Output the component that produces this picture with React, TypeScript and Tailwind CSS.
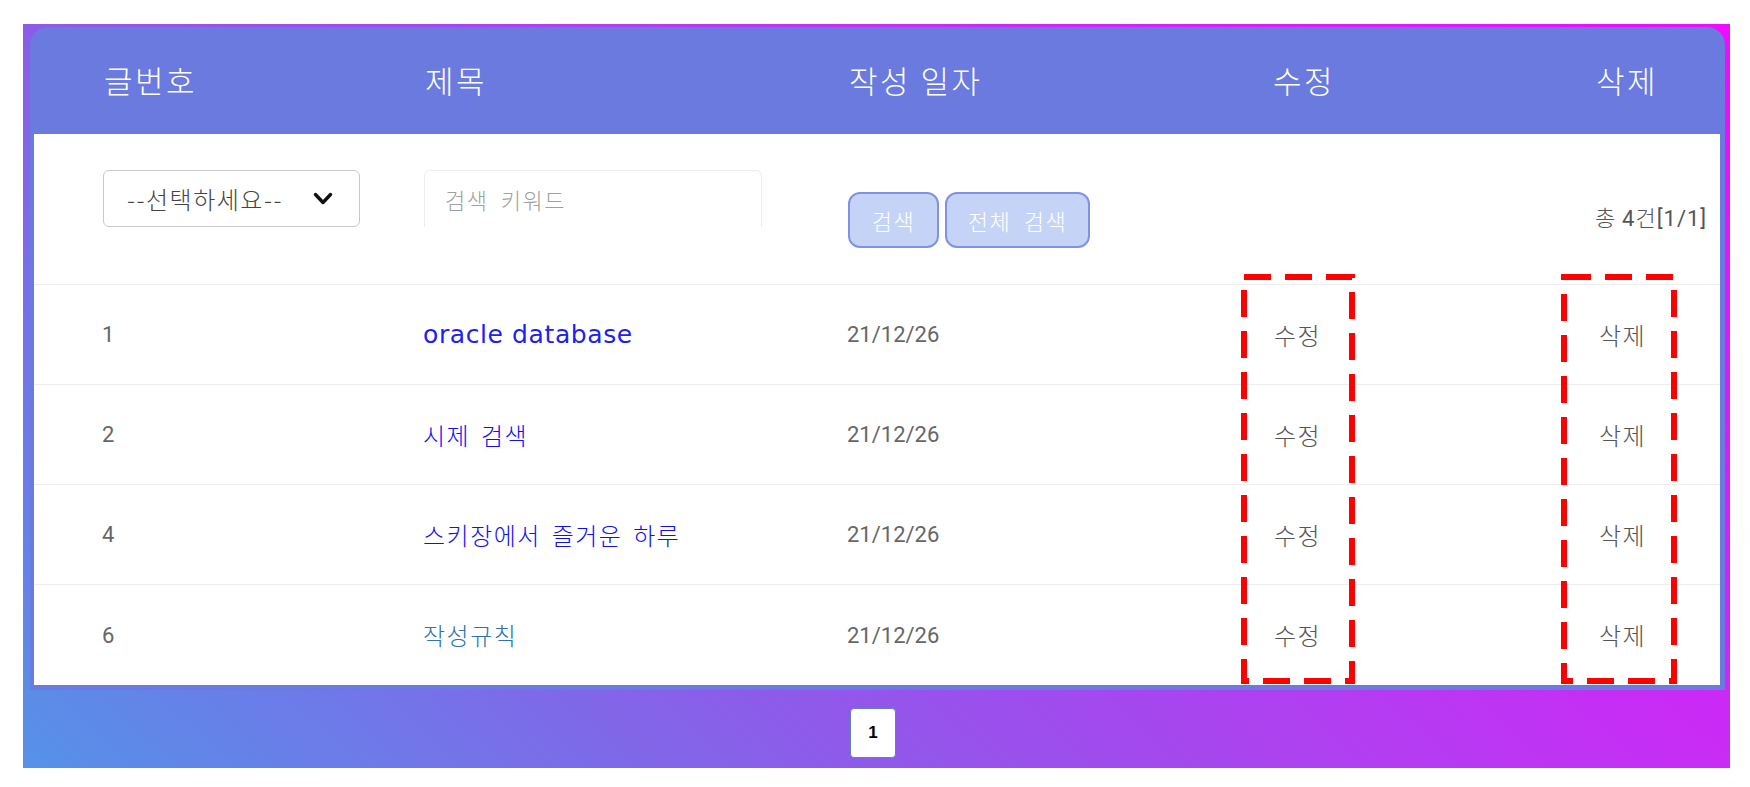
import React from "react";

const KR = "font-['Noto_Sans_CJK_KR','Noto_Sans',sans-serif] font-light";

const rows = [
  { n: "1", title: "oracle database", latin: true, color: "text-[#2020f2]" },
  { n: "2", title: "시제 검색", latin: false, color: "text-[#1010f5]" },
  { n: "4", title: "스키장에서 즐거운 하루", latin: false, color: "text-[#1010f5]" },
  { n: "6", title: "작성규칙", latin: false, color: "text-[#2f72b4]" },
];

function DashBox({ left, width }: { left: string; width: number }) {
  return (
    <svg
      className={`pointer-events-none absolute top-[140px] ${left}`}
      width={width}
      height={410}
      viewBox={`0 0 ${width} 410`}
    >
      <rect
        x={3}
        y={3}
        width={width - 6}
        height={404}
        fill="none"
        stroke="#ff0000"
        strokeWidth={6}
        strokeDasharray="27 14"
      />
    </svg>
  );
}

export default function App() {
  return (
    <div className="min-h-screen bg-white pl-[23px] pt-[24px]">
      <div className="flex h-[744px] w-[1707px] flex-col bg-[linear-gradient(43deg,#5592e8_0%,#8c5ce9_32%,#c82cf5_68%,#f00cff_100%)]">
        {/* card */}
        <div className="ml-[7px] mt-[3px] w-[1695px] rounded-t-[18px] bg-[#6b7ade] pb-[5px]">
          {/* header */}
          <div
            className={`grid h-[107px] grid-cols-[321px_424px_424px_323px_1fr] items-center pl-[74px] text-[31px] tracking-[2.5px] text-white ${KR}`}
          >
            <div>글번호</div>
            <div>제목</div>
            <div>작성 일자</div>
            <div>수정</div>
            <div>삭제</div>
          </div>

          {/* body */}
          <div className="relative ml-[4px] mr-[5px] bg-white">
            {/* filter row */}
            <div className="grid h-[150px] grid-cols-[321px_424px_424px_323px_1fr] items-start pl-[69px]">
              <div className="pt-[36px]">
                <div
                  className={`flex h-[57px] w-[257px] items-center justify-between rounded-[6px] border border-[#c9c9c9] pl-[23px] pr-[26px] text-[24px] tracking-[1.5px] text-[#444] ${KR}`}
                >
                  <span>--선택하세요--</span>
                  <svg width="20" height="14" viewBox="0 0 20 14">
                    <path d="M2.5 2.5 L10 10.5 L17.5 2.5" fill="none" stroke="#111" strokeWidth="3.4" strokeLinecap="round" strokeLinejoin="round" />
                  </svg>
                </div>
              </div>
              <div className="pt-[36px]">
                <div
                  className={`flex h-[57px] w-[338px] items-center rounded-t-[6px] border border-b-0 border-[#ececec] pl-[20px] text-[22px] tracking-[1.5px] [word-spacing:6px] text-[#a0a0a0] ${KR}`}
                >
                  검색 키워드
                </div>
              </div>
              <div className={`flex gap-[6px] pt-[58px] text-[22px] tracking-[1.5px] [word-spacing:6px] text-white ${KR}`}>
                <div className="flex h-[56px] w-[91px] items-center justify-center rounded-[12px] border-2 border-[#8191e6] bg-[#c5d4f6]">
                  검색
                </div>
                <div className="flex h-[56px] w-[145px] items-center justify-center rounded-[12px] border-2 border-[#8191e6] bg-[#c5d4f6]">
                  전체 검색
                </div>
              </div>
              <div />
              <div className={`pt-[68px] text-[22px] leading-[28px] tracking-[1px] text-[#555] ${KR}`}>
                총 <span className="font-['Roboto',sans-serif] font-normal">4</span>건<span className="font-['Roboto',sans-serif] font-normal">[1/1]</span>
              </div>
            </div>

            {/* data rows */}
            {rows.map((r, i) => (
              <div
                key={r.n}
                className={`grid ${i === rows.length - 1 ? "h-[101px]" : "h-[100px]"} grid-cols-[321px_424px_424px_323px_1fr] items-center border-t border-[#ededed] pl-[68px]`}
              >
                <div className="font-['Roboto',sans-serif] text-[22px] text-[#666]">{r.n}</div>
                <div
                  className={
                    r.latin
                      ? `font-['DejaVu_Sans',sans-serif] text-[25px] tracking-[0.6px] ${r.color}`
                      : `${KR} text-[24px] tracking-[1.5px] [word-spacing:4px] ${r.color}`
                  }
                >
                  {r.title}
                </div>
                <div className="font-['Roboto',sans-serif] text-[22px] text-[#666]">21/12/26</div>
                <div className={`${KR} pl-[3px] text-[24px] tracking-[1.5px] text-[#555]`}>수정</div>
                <div className={`${KR} pl-[5px] text-[24px] tracking-[1.5px] text-[#555]`}>삭제</div>
              </div>
            ))}

            <DashBox left="left-[1207px]" width={114} />
            <DashBox left="left-[1527px]" width={116} />
          </div>
        </div>

        {/* pagination */}
        <div className="flex justify-center pt-[18px]">
          <div className="ml-[-7px] flex h-[50px] w-[46px] items-center justify-center rounded-[4px] border border-[#5d82bd] bg-white font-['Liberation_Sans',sans-serif] text-[17px] font-bold text-black">
            1
          </div>
        </div>
      </div>
    </div>
  );
}
